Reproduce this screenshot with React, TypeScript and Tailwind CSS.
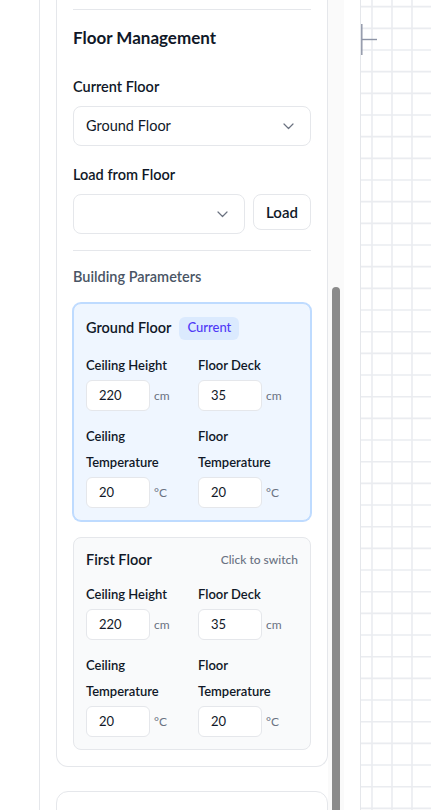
import React from "react";

function Chevron() {
  return (
    <svg width="11" height="7" viewBox="0 0 11 7" fill="none" className="shrink-0">
      <path d="M1 1l4.5 4.5L10 1" stroke="#6b7280" strokeWidth="1.2" strokeLinecap="round" strokeLinejoin="round" />
    </svg>
  );
}

function Field({ label, value, unit }: { label: React.ReactNode; value: string; unit: string }) {
  return (
    <div className="flex flex-col">
      <div className="text-[13px] font-semibold leading-[26px] text-gray-900">{label}</div>
      <div className="mt-[2px] flex items-center gap-1">
        <div className="flex h-[31px] w-16 items-center rounded-md border border-gray-200 bg-white px-3 text-[13px] text-gray-900">
          {value}
        </div>
        <span className="text-xs text-gray-500">{unit}</span>
      </div>
    </div>
  );
}

function FloorFields() {
  return (
    <div className="mt-3 grid grid-cols-2 gap-x-3 gap-y-3">
      <Field label="Ceiling Height" value="220" unit="cm" />
      <Field label="Floor Deck" value="35" unit="cm" />
      <Field label={<>Ceiling<br />Temperature</>} value="20" unit="°C" />
      <Field label={<>Floor<br />Temperature</>} value="20" unit="°C" />
    </div>
  );
}

function Canvas() {
  const vLines = [11, 31, 51];
  const hLines: number[] = [];
  for (let k = 0; k < 38; k++) hLines.push(6.67 + k * 21.667);
  return (
    <svg width="70" height="810" className="block">
      <rect width="70" height="810" fill="#ffffff" />
      {vLines.map((x) => (
        <line key={"v" + x} x1={x} y1={0} x2={x} y2={810} stroke="#eaecf0" strokeWidth="1.6" />
      ))}
      {hLines.map((y, i) => (
        <line key={"h" + i} x1={0} y1={y} x2={70} y2={y} stroke="#eaecf0" strokeWidth="1.6" />
      ))}
      <line x1={0.8} y1={24} x2={0.8} y2={55} stroke="#8d94a6" strokeWidth="1.4" />
      <line x1={0.8} y1={39.5} x2={16} y2={39.5} stroke="#8d94a6" strokeWidth="1.4" />
    </svg>
  );
}

export default function App() {
  return (
    <div className="flex h-[810px] w-[431px] overflow-hidden bg-white font-['Lato',sans-serif] text-gray-900">
      <div className="h-full w-10 shrink-0 border-r border-gray-200" />
      <div className="flex h-full w-[321px] shrink-0 border-r border-gray-200">
        <div className="flex w-[288px] flex-col gap-6 overflow-hidden pl-4">
          <section className="w-[272px] shrink-0 rounded-b-xl border-x border-b border-gray-200 px-4 pb-4">
            <div className="h-[9px]" />
            <div className="border-t border-gray-200" />
            <h2 className="mt-[14px] text-[17px] font-bold leading-7 text-gray-900">Floor Management</h2>

            <div className="mt-[25px] text-[14.5px] font-semibold leading-5 text-gray-900">Current Floor</div>
            <div className="mt-[9px] flex h-10 items-center justify-between rounded-lg border border-gray-200 bg-white pl-3 pr-4">
              <span className="text-[14.5px] text-gray-900">Ground Floor</span>
              <Chevron />
            </div>

            <div className="mt-[19px] text-[14.5px] font-semibold leading-5 text-gray-900">Load from Floor</div>
            <div className="mt-[9px] flex items-start gap-2">
              <div className="flex h-10 flex-1 items-center justify-end rounded-lg border border-gray-200 bg-white pr-4">
                <Chevron />
              </div>
              <button className="flex h-9 w-[58px] items-center justify-center rounded-lg border border-gray-200 bg-white text-[15px] font-semibold text-gray-900">
                Load
              </button>
            </div>

            <div className="mt-4 border-t border-gray-200" />
            <div className="mt-4 text-[14.5px] font-semibold leading-5 text-gray-600">Building Parameters</div>

            <div className="mt-4 flex flex-col gap-4">
              <div className="rounded-lg border border-blue-200 bg-blue-50 p-3 ring-1 ring-blue-200">
                <div className="flex h-6 items-center gap-2">
                  <span className="text-[14.5px] font-semibold text-gray-900">Ground Floor</span>
                  <span className="flex h-[23px] items-center rounded-md bg-blue-100 px-2 text-[13px] font-medium text-indigo-600">
                    Current
                  </span>
                </div>
                <FloorFields />
              </div>

              <div className="rounded-lg border border-gray-200 bg-gray-50 p-3">
                <div className="flex h-[19px] items-center justify-between">
                  <span className="text-[14.5px] font-semibold text-gray-900">First Floor</span>
                  <span className="text-xs font-medium text-gray-500">Click to switch</span>
                </div>
                <FloorFields />
              </div>
            </div>
          </section>
          <section className="h-40 w-[272px] shrink-0 rounded-t-xl border border-gray-200" />
        </div>
        <div className="flex h-full w-4 shrink-0 flex-col bg-[#fafafa]">
          <div className="mx-1 mt-[287px] flex-1 rounded-t-full bg-[#8b8b8b]" />
        </div>
        <div className="w-4 shrink-0" />
      </div>
      <div className="flex-1">
        <Canvas />
      </div>
    </div>
  );
}
